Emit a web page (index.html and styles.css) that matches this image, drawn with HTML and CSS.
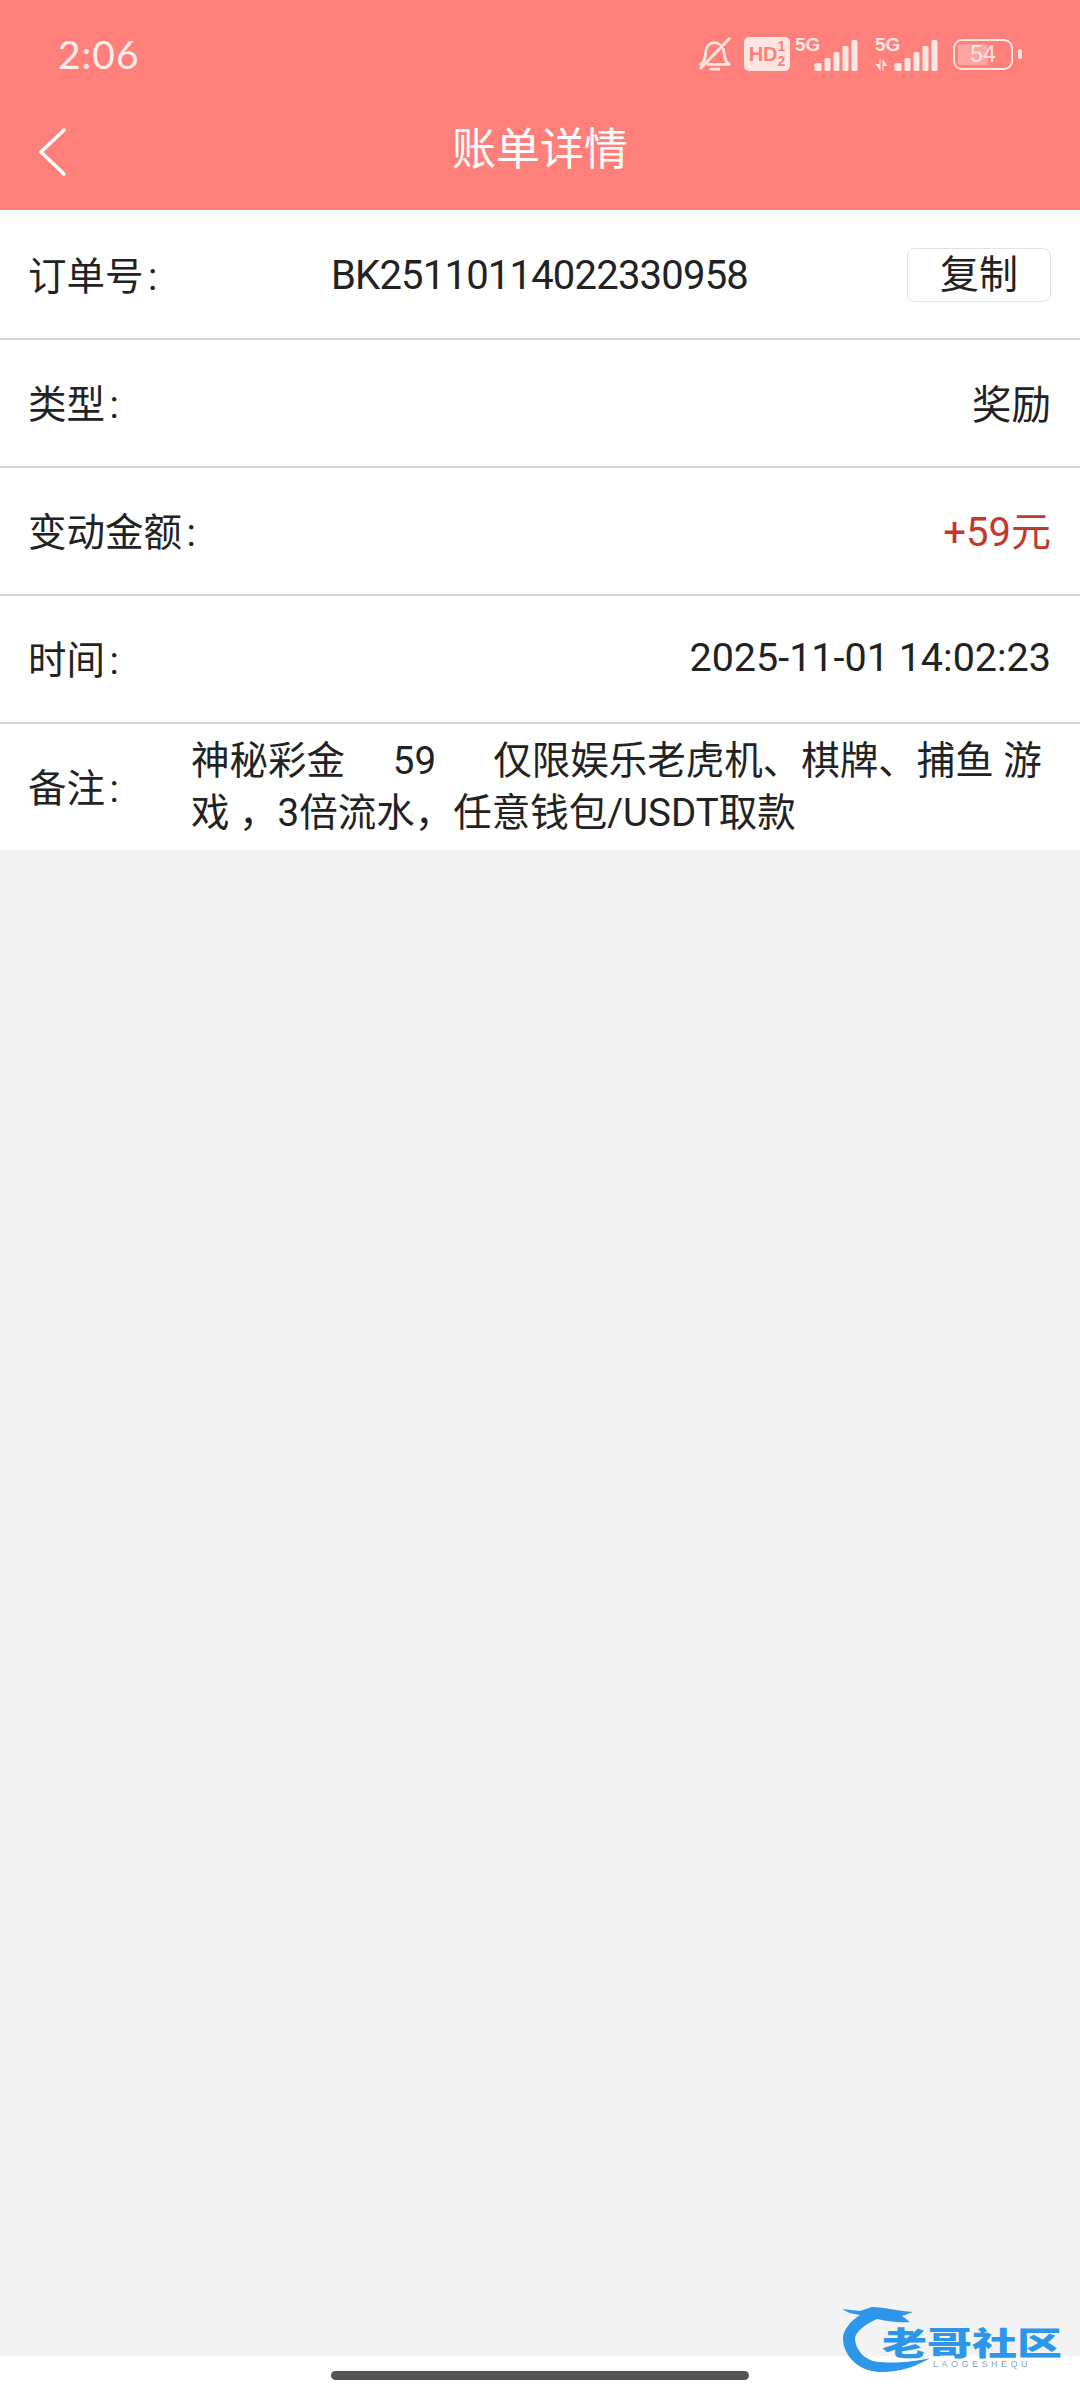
FILE: index.html
```html
<!DOCTYPE html>
<html lang="zh-CN">
<head>
  <meta charset="UTF-8">
  <meta name="viewport" content="width=device-width, initial-scale=1.0">
  <title>账单详情</title>
  <link rel="stylesheet" href="styles.css">
</head>
<body>
  <div class="page">
    <header class="top">
      <div class="status">
        <span class="clock">2:06</span>
        <div class="status-icons">
          <svg class="bell" width="36" height="38" viewBox="0 0 38 38" fill="none" stroke="#ffe6e3" stroke-width="3" stroke-linecap="round" stroke-linejoin="round">
            <path d="M4 30c3-2 4-4 4.500-8l1-7c.8-5 5-8 9-8 2 0 4 .8 6 2.500"/>
            <path d="M28 14l1.500 9c.5 3 2 5 4.500 7H12"/>
            <path d="M15 35h8"/>
            <path d="M4 34L34 3"/>
          </svg>
          <div class="hd"><b>HD</b><span class="hd-sim"><i>1</i><i>2</i></span></div>
          <div class="net">
            <span class="net-label">5G</span>
            <svg width="47" height="34" viewBox="0 0 44 34" fill="#ffe6e3">
              <rect x="0" y="24" width="7" height="8" rx="1.500"/>
              <rect x="10" y="19" width="6" height="13" rx="1.500"/>
              <rect x="19" y="13" width="6" height="19" rx="1.500"/>
              <rect x="28" y="7" width="6" height="25" rx="1.500"/>
              <rect x="37" y="1" width="6" height="31" rx="1.500"/>
            </svg>
          </div>
          <div class="net net-data">
            <span class="net-label">5G</span>
            <svg width="67" height="34" viewBox="0 0 64 34" fill="#ffe6e3">
              <path d="M5 20v5H1l5 7v-12zM9 32v-5h4l-5-7v12z"/>
              <rect x="20" y="24" width="7" height="8" rx="1.500"/>
              <rect x="30" y="19" width="6" height="13" rx="1.500"/>
              <rect x="39" y="13" width="6" height="19" rx="1.500"/>
              <rect x="48" y="7" width="6" height="25" rx="1.500"/>
              <rect x="57" y="1" width="6" height="31" rx="1.500"/>
            </svg>
          </div>
          <div class="battery">
            <div class="battery-body"><span class="battery-level"></span><span class="battery-num">54</span></div>
            <span class="battery-tip"></span>
          </div>
        </div>
      </div>
      <div class="navbar">
        <svg class="back" width="30" height="48" viewBox="0 0 30 48" fill="none" stroke="#fff" stroke-width="3.500" stroke-linecap="round" stroke-linejoin="round">
          <path d="M26 2L3 24l23 22"/>
        </svg>
        <h1 class="title">账单详情</h1>
      </div>
    </header>

    <section class="detail">
      <div class="row">
        <span class="label">订单号 :</span>
        <span class="order-no">BK25110114022330958</span>
        <button class="copy">复制</button>
      </div>
      <div class="row">
        <span class="label">类型 :</span>
        <span class="value">奖励</span>
      </div>
      <div class="row">
        <span class="label">变动金额 :</span>
        <span class="value amount">+59元</span>
      </div>
      <div class="row">
        <span class="label">时间 :</span>
        <span class="value">2025-11-01 14:02:23</span>
      </div>
      <div class="row row-note">
        <span class="label">备注 :</span>
        <p class="note">神秘彩金&nbsp;&nbsp;&nbsp;&nbsp;&nbsp;59&nbsp;&nbsp;&nbsp;&nbsp;&nbsp;&nbsp;仅限娱乐老虎机、棋牌、捕鱼 游戏 ，3倍流水，任意钱包/USDT取款</p>
      </div>
    </section>

    <main class="empty"></main>

    <footer class="gesture">
      <span class="handle"></span>
    </footer>

    <!-- watermark sits over the bottom edge -->
    <div class="mark">
      <svg class="dragon" width="90" height="70" viewBox="0 0 90 70">
        <path fill="#2b96ea" d="M0 6L18 8L30 4C40 4 50 7 71 9L60 13L68 19C55 20 45 18 35 16C25 20 14 28 13 35C13 48 25 59 38 59C52 60 65 60 88 55C75 63 60 69 38 69C20 69 1 55 1 35C1 28 8 18 18 12C10 11 4 9 0 6Z"/>
      </svg>
      <strong class="mark-name">老哥社区</strong>
      <small class="mark-sub">LAOGESHEQU</small>
    </div>
  </div>
</body>
</html>
```

FILE: styles.css
```css
* {
  box-sizing: border-box;
}
body {
  margin: 0;
  font-family: "Roboto", "Noto Sans CJK SC", sans-serif;
  color: #222;
  background: #f3f3f3;
}
.page {
  position: relative;
  width: 1080px;
  height: 2400px;
  display: flex;
  flex-direction: column;
  overflow: hidden;
}

/* header */
.top {
  height: 210px;
  background: #ff7f7a;
  color: #fff;
}
.status {
  height: 108px;
  padding: 0 58px;
  display: flex;
  align-items: center;
  justify-content: space-between;
}
.clock {
  font-family: "Lato", sans-serif;
  font-size: 39px;
  color: #ffeeec;
  letter-spacing: 1px;
}
.status-icons {
  display: flex;
  align-items: center;
}
.bell {
  margin-right: 11px;
}
.hd {
  width: 46px;
  height: 34px;
  border-radius: 5px;
  background: #ffe6e3;
  color: #ff7f7a;
  display: flex;
  align-items: center;
  justify-content: center;
  font-family: "Liberation Sans", sans-serif;
  font-size: 20px;
  line-height: 1;
  margin-right: 5px;
}
.hd-sim {
  display: flex;
  flex-direction: column;
  font-size: 14px;
  font-weight: bold;
  line-height: 15px;
}
.hd-sim i {
  font-style: normal;
}
.net {
  position: relative;
  display: flex;
  align-items: flex-end;
  height: 38px;
  margin-right: 13px;
}
.net-label {
  position: absolute;
  left: 0;
  top: 0;
  font-family: "Liberation Sans", sans-serif;
  font-size: 19px;
  line-height: 20px;
  font-weight: bold;
  color: #ffe6e3;
}
.net svg {
  margin-left: 18px;
}
.net-data .net-label {
  left: 2px;
}
.net-data svg {
  margin-left: 0;
}
.battery {
  display: flex;
  align-items: center;
  gap: 5px;
}
.battery-body {
  position: relative;
  width: 60px;
  height: 31px;
  border: 2.500px solid #ffe6e3;
  border-radius: 9px;
  display: flex;
  align-items: center;
  justify-content: center;
}
.battery-level {
  position: absolute;
  left: 3px;
  top: 3px;
  bottom: 3px;
  width: 30px;
  border-radius: 3px;
  background: #ffa5a0;
}
.battery-num {
  position: relative;
  font-family: "Liberation Sans", sans-serif;
  font-size: 23px;
  line-height: 1;
  color: #ffe6e3;
}
.battery-tip {
  width: 4px;
  height: 10px;
  border-radius: 2px;
  background: #ffe6e3;
}
.navbar {
  position: relative;
  height: 102px;
  display: flex;
  align-items: center;
  justify-content: center;
  padding-bottom: 26px;
}
.back {
  position: absolute;
  left: 38px;
  top: 20px;
}
.title {
  margin: 0;
  font-family: "Noto Sans CJK SC", sans-serif;
  font-size: 44px;
  font-weight: 400;
  line-height: 60px;
}

/* rows */
.detail {
  padding-top: 2px;
  background: #fff;
}
.row {
  height: 128px;
  padding: 0 29px 0 28px;
  border-bottom: 2px solid #d4d4d4;
  display: flex;
  align-items: center;
  justify-content: space-between;
  font-size: 38.500px;
}
.label {
  padding-bottom: 4px;
  word-spacing: -5px;
  white-space: nowrap;
}
.order-no {
  position: absolute;
  left: 331px;
  font-size: 40px;
  letter-spacing: -0.800px;
}
.value {
  padding-bottom: 4px;
  font-size: 39.500px;
}
.amount {
  font-size: 40px;
  color: #c0392b;
}
.copy {
  width: 144px;
  height: 54px;
  padding: 0;
  border: 1.500px solid #e2e2e2;
  border-radius: 8px;
  background: #fff;
  color: #222;
  font-family: inherit;
  font-size: 39px;
  line-height: 1;
}
.row-note {
  height: 126px;
  border-bottom: 0;
  justify-content: flex-start;
}
.row-note .label {
  width: 163px;
  flex: none;
}
.note {
  margin: 0;
  font-size: 38.500px;
  line-height: 52px;
}

.empty {
  flex: 1;
  background: #f3f3f3;
}
.gesture {
  height: 44px;
  background: #fff;
  display: flex;
  justify-content: center;
  padding-top: 15px;
}
.handle {
  width: 418px;
  height: 9px;
  border-radius: 5px;
  background: #555;
}

/* watermark */
.mark {
  position: absolute;
  left: 842px;
  top: 2303px;
  width: 230px;
  height: 72px;
}
.dragon {
  position: absolute;
  left: 0;
  top: 0;
}
.mark-name {
  position: absolute;
  left: 40px;
  top: 23px;
  font-family: "Noto Sans CJK SC", sans-serif;
  font-size: 45px;
  font-weight: 900;
  line-height: 30px;
  color: #2b96ea;
  white-space: nowrap;
  transform: scaleY(0.72);
}
.mark-sub {
  position: absolute;
  left: 91px;
  top: 56px;
  font-family: "Liberation Sans", sans-serif;
  font-size: 9px;
  letter-spacing: 3.500px;
  line-height: 10px;
  color: #7aa6d0;
}
```
